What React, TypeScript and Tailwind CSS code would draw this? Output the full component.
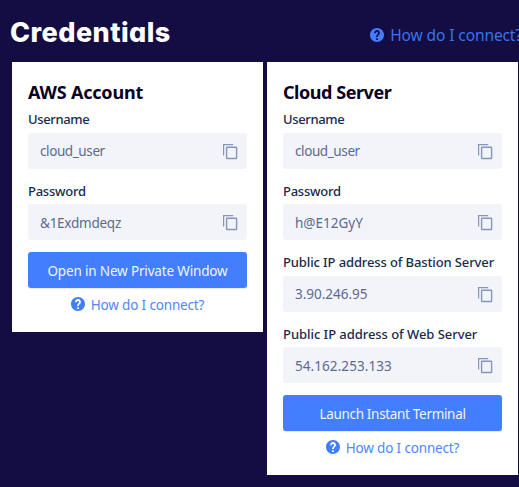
type Field = { label: string; value: string; labelClass?: string; valueClass?: string };

function HelpIcon({ className }: { className: string }) {
  return (
    <svg viewBox="2 2 20 20" className={`size-[14px] shrink-0 ${className}`} fill="currentColor">
      <path d="M12 2C6.48 2 2 6.48 2 12s4.48 10 10 10 10-4.48 10-10S17.52 2 12 2zm1.3 17h-2.6v-2.4h2.6V19zm1.9-7.5-.9.92C13.6 13.1 13.3 13.6 13.3 15h-2.6v-.6c0-1.1.45-2.1 1.17-2.83l1.1-1.1c.3-.3.5-.7.5-1.15 0-.85-.65-1.5-1.5-1.5s-1.5.7-1.5 1.6H7.9C7.9 6.9 9.7 5 12 5s4.1 1.8 4.1 4.1c0 .9-.36 1.8-.9 2.4z" />
    </svg>
  );
}

function CopyIcon() {
  return (
    <svg viewBox="0 0 15 16" className="mt-[.8px] h-4 w-[15px] shrink-0" fill="none" stroke="#8496bd">
      <path d="M.6 11.5V.6H10.2" strokeWidth="1.2" />
      <rect x="3.6" y="3.3" width="10" height="11.2" rx=".5" strokeWidth="1.4" />
    </svg>
  );
}

function FieldRow({ label, value, labelClass = "", valueClass = "" }: Field) {
  return (
    <div className="h-[71.45px]">
      <div className={`h-[28px] pt-[.4px] text-[13px] leading-[28px] font-medium whitespace-nowrap text-[#172b4d] ${labelClass}`}>
        {label}
      </div>
      <div className="flex h-9 items-center justify-between rounded-[3px] bg-[#f3f4fa] pt-[.8px] pr-[9px] pl-3 text-[13.5px] text-[#5a6b90]">
        <span className={valueClass}>{value}</span>
        <CopyIcon />
      </div>
    </div>
  );
}

function Card({ title, fields, action, className, titleClass, actionClass }: {
  title: string; fields: Field[]; action: string; className: string; titleClass: string; actionClass: string;
}) {
  return (
    <section className={`w-[251px] bg-white px-4 pt-[19px] ${className}`}>
      <h2 className={`-mt-px mb-px h-6 text-[18px] leading-6 font-bold text-[#09001f] ${titleClass}`}>{title}</h2>
      <div>
        {fields.map((f) => <FieldRow key={f.label} {...f} />)}
      </div>
      <button className={`mt-[4.2px] block h-9 w-full rounded-[3px] bg-[#427eff] pt-[2px] text-[13.5px] text-[#f0f5ff] shadow-[0_1px_1px_#e5e9f5] ${actionClass}`}>{action}</button>
      <a className="mt-[7px] flex h-5 items-center justify-center text-[13.5px] tracking-[-.16px] text-[#4f87ff]">
        <HelpIcon className="mr-[6px] -mt-[2px] text-[#427eff]" />
        <span>How do I connect?</span>
      </a>
    </section>
  );
}

export default function App() {
  return (
    <main className="h-[487px] w-[519px] overflow-hidden bg-[#130d44] font-['Noto_Sans','Liberation_Sans',sans-serif]">
      <header className="flex h-[62px] items-start justify-between pt-[18px] pl-[10px]">
        <h1 className="font-['Inter',sans-serif] text-[27px] leading-[30px] font-extrabold tracking-[.45px] text-white [font-feature-settings:'cv11']">Credentials</h1>
        <a className="-mr-[3px] mt-[7px] flex h-5 items-center text-[15.5px] tracking-[-.1px] whitespace-nowrap text-[#3c72ea]">
          <HelpIcon className="mr-[6px] text-[#427eff]" />
          <span className="pt-px">How do I connect?</span>
        </a>
      </header>
      <div className="flex items-start gap-1 pl-3">
        <Card title="AWS Account" className="h-[270px]" titleClass="tracking-[-.2px]" action="Open in New Private Window" actionClass="tracking-[-.16px]"
          fields={[
            { label: "Username", value: "cloud_user", labelClass: "tracking-[-.35px]", valueClass: "tracking-[-.4px]" },
            { label: "Password", value: "&1Exdmdeqz", labelClass: "tracking-[-.25px]", valueClass: "tracking-[-.25px]" },
          ]} />
        <Card title="Cloud Server" className="h-[413px]" titleClass="tracking-[-.45px]" action="Launch Instant Terminal" actionClass="tracking-[-.32px]"
          fields={[
            { label: "Username", value: "cloud_user", labelClass: "tracking-[-.35px]", valueClass: "tracking-[-.4px]" },
            { label: "Password", value: "h@E12GyY", labelClass: "tracking-[-.25px]", valueClass: "tracking-[0px]" },
            { label: "Public IP address of Bastion Server", value: "3.90.246.95", labelClass: "tracking-[-.12px]", valueClass: "tracking-[-.02px]" },
            { label: "Public IP address of Web Server", value: "54.162.253.133", labelClass: "tracking-[-.05px]", valueClass: "tracking-[.07px]" },
          ]} />
      </div>
    </main>
  );
}
